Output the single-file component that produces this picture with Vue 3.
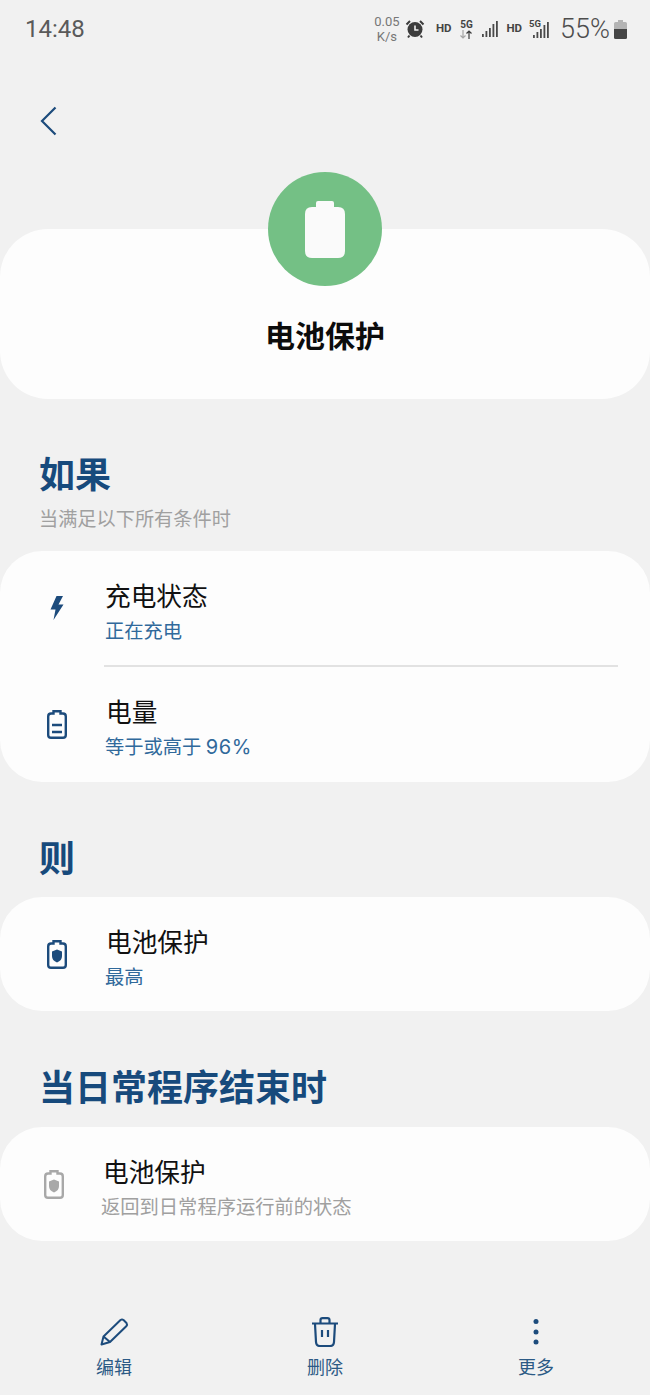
<script setup>
const barHeights = [3, 6, 9, 13, 16]
</script>

<template>
  <div class="page">
    <header class="status">
      <span class="time">14:48</span>
      <div class="status-right">
        <span class="speed">0.05<br />K/s</span>
        <svg class="alarm" width="20" height="20" viewBox="0 0 20 20">
          <circle cx="10" cy="10.5" r="7.5" fill="#3c3c3c" />
          <path d="M1.5 5.5 L5 2 M18.5 5.5 L15 2" stroke="#3c3c3c" stroke-width="2" fill="none" />
          <path d="M4.5 16.5 L3 18.5 M15.5 16.5 L17 18.5" stroke="#3c3c3c" stroke-width="2" fill="none" />
          <path d="M10 6.5 V11 H13.5" stroke="#f0f0f0" stroke-width="1.6" fill="none" />
        </svg>
        <span class="hd hd-first">HD</span>
        <span class="net">
          <span class="net-5g">5G</span>
          <svg width="14" height="9" viewBox="0 0 14 9">
            <path d="M4 0 V8 M1.5 5.5 L4 8 L6.5 5.5" stroke="#a5a5a5" stroke-width="1.2" fill="none" />
            <path d="M10 9 V1 M7.5 3.5 L10 1 L12.5 3.5" stroke="#3c3c3c" stroke-width="1.2" fill="none" />
          </svg>
        </span>
        <svg class="signal" width="17" height="16" viewBox="0 0 17 16">
          <rect v-for="(h, i) in barHeights" :key="i" :x="i * 3.5" :y="16 - h" width="1.8" :height="h" fill="#4a4a4a" />
        </svg>
        <span class="hd hd-second">HD</span>
        <span class="sim2">
          <span class="sim2-5g">5G</span>
          <svg class="signal2" width="17" height="16" viewBox="0 0 17 16">
            <rect v-for="(h, i) in barHeights" :key="i" :x="i * 3.5" :y="16 - h" width="1.8" :height="h" fill="#4a4a4a" />
          </svg>
        </span>
        <span class="pct">55%</span>
        <svg class="batt" width="13" height="19" viewBox="0 0 13 19">
          <path d="M4 0 H9 V2 H11.5 Q13 2 13 3.5 V9 H0 V3.5 Q0 2 1.5 2 H4 Z" fill="#b4b4b4" />
          <path d="M0 9 H13 V17.5 Q13 19 11.5 19 H1.5 Q0 19 0 17.5 Z" fill="#454545" />
        </svg>
      </div>
    </header>

    <nav class="nav">
      <svg width="18" height="30" viewBox="0 0 18 30">
        <path d="M15.5 1.5 L2 15 L15.5 28.5" stroke="#1c4b7c" stroke-width="2.2" fill="none" />
      </svg>
    </nav>

    <section class="hero">
      <div class="hero-badge">
        <svg width="40" height="57" viewBox="0 0 40 57">
          <path d="M13 0 H27 Q29 0 29 2 V6 H33 Q40 6 40 13 V50 Q40 57 33 57 H7 Q0 57 0 50 V13 Q0 6 7 6 H11 V2 Q11 0 13 0 Z" fill="#fafafa" />
        </svg>
      </div>
      <h1 class="hero-title">电池保护</h1>
    </section>

    <h2 class="heading heading-if">如果</h2>
    <p class="hint">当满足以下所有条件时</p>
    <section class="card">
      <div class="row">
        <div class="row-icon">
          <svg width="14" height="24" viewBox="0 0 14 24">
            <path d="M6.5 0 L0.5 13.5 H5.5 L3.5 24 L13.5 8.5 H8.5 L13 0 Z" fill="#1c4b7c" />
          </svg>
        </div>
        <div class="row-text">
          <div class="row-title">充电状态</div>
          <div class="row-sub">正在充电</div>
        </div>
      </div>
      <div class="divider"></div>
      <div class="row row-tall">
        <div class="row-icon icon-shift">
          <svg width="20" height="29" viewBox="0 0 20 29">
            <path d="M6.5 1.2 H13.5 V3.5 H16 Q18.8 3.5 18.8 6.5 V25 Q18.8 27.8 16 27.8 H4 Q1.2 27.8 1.2 25 V6.5 Q1.2 3.5 4 3.5 H6.5 Z" fill="none" stroke="#1c4b7c" stroke-width="2.4" />
            <path d="M5 15 H15 M5 22 H15" stroke="#1c4b7c" stroke-width="2.4" />
          </svg>
        </div>
        <div class="row-text">
          <div class="row-title title-shift">电量</div>
          <div class="row-sub">等于或高于 <span class="num">96%</span></div>
        </div>
      </div>
    </section>

    <h2 class="heading heading-then">则</h2>
    <section class="card">
      <div class="row">
        <div class="row-icon icon-shift">
          <svg width="20" height="29" viewBox="0 0 20 29">
            <path d="M6.5 1.2 H13.5 V3.5 H16 Q18.8 3.5 18.8 6.5 V25 Q18.8 27.8 16 27.8 H4 Q1.2 27.8 1.2 25 V6.5 Q1.2 3.5 4 3.5 H6.5 Z" fill="none" stroke="#1c4b7c" stroke-width="2.4" />
            <path d="M10 9.5 L15 11.5 V16 Q15 20.5 10 22.5 Q5 20.5 5 16 V11.5 Z" fill="#1c4b7c" />
          </svg>
        </div>
        <div class="row-text">
          <div class="row-title title-shift">电池保护</div>
          <div class="row-sub">最高</div>
        </div>
      </div>
    </section>

    <h2 class="heading heading-end">当日常程序结束时</h2>
    <section class="card">
      <div class="row">
        <div class="row-icon icon-back">
          <svg width="20" height="29" viewBox="0 0 20 29">
            <path d="M6.5 1.2 H13.5 V3.5 H16 Q18.8 3.5 18.8 6.5 V25 Q18.8 27.8 16 27.8 H4 Q1.2 27.8 1.2 25 V6.5 Q1.2 3.5 4 3.5 H6.5 Z" fill="none" stroke="#a8a8a8" stroke-width="2.4" />
            <path d="M10 9.5 L15 11.5 V16 Q15 20.5 10 22.5 Q5 20.5 5 16 V11.5 Z" fill="#a8a8a8" />
          </svg>
        </div>
        <div class="row-text text-back">
          <div class="row-title">电池保护</div>
          <div class="row-sub muted">返回到日常程序运行前的状态</div>
        </div>
      </div>
    </section>

    <footer class="actions">
      <div class="action">
        <svg width="30" height="30" viewBox="0 0 30 30">
          <path d="M21.5 3 Q23 2 24.5 3 L27.5 6 Q28.5 7.5 27.5 9 L11 25 L2.5 27.5 L4.5 19.5 Z M4.5 19.5 L11 25" fill="none" stroke="#1c4b7c" stroke-width="2" stroke-linejoin="round" />
        </svg>
        <span>编辑</span>
      </div>
      <div class="action">
        <svg width="28" height="30" viewBox="0 0 28 30">
          <path d="M1 6.5 H27 M9.5 6 V3 Q9.5 1.2 11.5 1.2 H16.5 Q18.5 1.2 18.5 3 V6 M4 7 L5 25 Q5.3 29 9 29 H19 Q22.7 29 23 25 L24 7 M11 13 V20 M17 13 V20" fill="none" stroke="#1c4b7c" stroke-width="2.2" />
        </svg>
        <span>删除</span>
      </div>
      <div class="action">
        <svg width="6" height="30" viewBox="0 0 6 30">
          <circle cx="3" cy="4.5" r="2.5" fill="#1c4b7c" />
          <circle cx="3" cy="15" r="2.5" fill="#1c4b7c" />
          <circle cx="3" cy="25" r="2.5" fill="#1c4b7c" />
        </svg>
        <span>更多</span>
      </div>
    </footer>
  </div>
</template>

<style>
body { background: #f1f1f1; }
</style>

<style scoped>
.page {
  width: 650px;
  height: 1395px;
  overflow: hidden;
  background: #f1f1f1;
  font-family: "Noto Sans CJK SC", "Noto Sans", sans-serif;
  color: #111;
}
.status {
  height: 58px;
  display: flex;
  align-items: center;
  justify-content: space-between;
  padding: 0 23px 0 25px;
  color: #4a4a4a;
}
.time { font: 24px/1 Roboto, sans-serif; color: #5a5a5a; }
.status-right { display: flex; align-items: center; }
.speed {
  font: 13px/15px Roboto, sans-serif;
  text-align: center;
  color: #777;
  width: 26px;
}
.alarm { margin-left: 5px; }
.hd { font: bold 11.5px/1 Roboto, sans-serif; color: #444; }
.hd-first { margin-left: 11px; }
.net {
  margin-left: 8px;
  width: 14px;
  display: flex;
  flex-direction: column;
  align-items: center;
}
.net-5g { font: bold 10px/10px Roboto, sans-serif; color: #444; }
.signal { margin-left: 9px; }
.hd-second { margin-left: 7px; }
.sim2 { margin-left: 7px; width: 21px; height: 20px; position: relative; }
.sim2-5g { position: absolute; left: 0; top: 0; font: bold 9.5px/10px Roboto, sans-serif; color: #444; }
.signal2 { position: absolute; left: 4px; top: 3px; }
.pct { margin-left: 10px; font: 27px/1 Roboto, sans-serif; font-weight: 300; color: #4d4d4d; }
.batt { margin-left: 4px; }

.nav { height: 171px; padding: 48px 0 0 40px; box-sizing: border-box; }
.nav svg { display: block; }

.hero {
  position: relative;
  height: 170px;
  background: #fdfdfd;
  border-radius: 48px;
  box-sizing: border-box;
  padding-top: 81px;
}
.hero-badge {
  position: absolute;
  left: 268px;
  top: -57px;
  width: 114px;
  height: 114px;
  border-radius: 50%;
  background: #74c085;
  display: flex;
  align-items: center;
  justify-content: center;
}
.hero-title {
  margin: 0;
  text-align: center;
  font-size: 30px;
  line-height: 48px;
  font-weight: 700;
  color: #0c0c0c;
}

.heading {
  margin: 0;
  padding-left: 39px;
  font-size: 36px;
  line-height: 50px;
  font-weight: 700;
  color: #174a7c;
}
.heading-if { margin-top: 48px; }
.heading-then { margin-top: 49px; }
.heading-end { margin-top: 49px; }
.hint {
  margin: 8px 0 19px;
  padding-left: 39px;
  font-size: 19.2px;
  line-height: 27px;
  color: #a0a0a0;
}
.card {
  background: #fdfdfd;
  border-radius: 42px;
}
.heading-then + .card { margin-top: 16px; }
.heading-end + .card { margin-top: 17px; }

.row {
  height: 114px;
  display: flex;
  align-items: center;
}
.row-tall { height: 115px; }
.row-icon {
  width: 105px;
  flex: none;
  display: flex;
  padding-left: 50px;
  box-sizing: border-box;
}
.row-icon svg { display: block; }
.icon-shift { padding-left: 47px; }
.icon-back { padding-left: 44px; width: 101px; }
.row-text { flex: 1; padding-top: 3px; }
.row-title {
  font-size: 25.7px;
  line-height: 38px;
  color: #111;
}
.title-shift { padding-left: 1px; }
.row-sub {
  margin-top: 2px;
  font-size: 19.3px;
  line-height: 28px;
  color: #30699b;
}
.num { font-family: Inter, sans-serif; font-size: 20px; letter-spacing: 0.6px; }
.text-back .row-title { padding-left: 2px; }
.muted { color: #a0a0a0; }
.divider {
  height: 2px;
  background: #e2e2e2;
  margin: 0 32px 0 104px;
}

.actions {
  margin-top: 76px;
  display: flex;
  justify-content: space-between;
  padding: 0 78px 0 78px;
}
.action {
  width: 72px;
  display: flex;
  flex-direction: column;
  align-items: center;
  font-size: 18px;
  line-height: 26px;
  color: #2c5a85;
}
.action svg { display: block; margin-bottom: 6px; }
.action span { display: block; }
</style>
